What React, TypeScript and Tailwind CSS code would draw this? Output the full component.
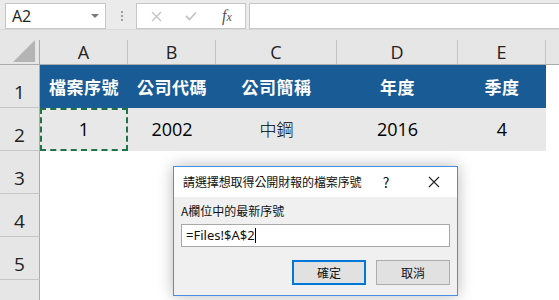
import { useState } from 'react';

const cols = [
  { key: 'A', w: 'w-[88px]' },
  { key: 'B', w: 'w-[88px]' },
  { key: 'C', w: 'w-[121px]' },
  { key: 'D', w: 'w-[121px]' },
  { key: 'E', w: 'w-[88px]' },
];

const headers = ['檔案序號', '公司代碼', '公司簡稱', '年度', '季度'];
const values = ['1', '2002', '中鋼', '2016', '4'];

function FormulaBar() {
  return (
    <div className="h-[30px] bg-[#ebebeb] flex items-start border-b border-[#dadada]">
      {/* Name box */}
      <div className="ml-[5px] mt-[3px] w-[101px] h-[26px] bg-white border border-[#c6c6c6] flex items-center justify-between pl-[6px] pr-[6px]">
        <span className="text-[16px] text-[#222] font-['Open_Sans',sans-serif]">A2</span>
        <svg width="8" height="5" viewBox="0 0 8 5">
          <path d="M0 0 L8 0 L4 4 Z" fill="#7a7a7a" />
        </svg>
      </div>
      {/* Grip dots */}
      <div className="ml-[15px] mt-[11px] flex flex-col gap-[2px]">
        <div className="w-[2px] h-[2px] bg-[#a0a0a0]" />
        <div className="w-[2px] h-[2px] bg-[#a0a0a0]" />
        <div className="w-[2px] h-[2px] bg-[#a0a0a0]" />
      </div>
      {/* Cancel / enter / fx */}
      <div className="ml-[13px] mt-[3px] w-[110px] h-[26px] bg-white border border-[#c6c6c6] flex items-center">
        <svg width="11" height="11" viewBox="0 0 11 11" className="ml-[14px]">
          <path d="M1 1 L10 10 M10 1 L1 10" stroke="#c4c4c4" strokeWidth="1.4" />
        </svg>
        <svg width="12" height="10" viewBox="0 0 12 10" className="ml-[23px]">
          <path d="M1 5 L4.5 8.5 L11 1.5" stroke="#c4c4c4" strokeWidth="1.8" fill="none" />
        </svg>
        <span className="ml-[25px] text-[16px] italic text-[#555] font-['Liberation_Serif',serif] leading-none">
          f<span className="text-[12px]">x</span>
        </span>
      </div>
      <div className="ml-[3px] mt-[3px] flex-1 h-[26px] bg-white border border-[#c6c6c6] border-r-0" />
    </div>
  );
}

function ColumnHeaders() {
  return (
    <div className="h-[35px] bg-[#e6e6e6] flex border-b border-[#ababab]">
      <div className="w-[40px] shrink-0 border-r border-[#ababab] mt-[10px] relative">
        <svg width="22" height="22" viewBox="0 0 22 22" className="absolute right-[4px] bottom-[2px]">
          <path d="M22 0 L22 22 L0 22 Z" fill="#b4b4b4" />
        </svg>
      </div>
      {cols.map((c) => (
        <div
          key={c.key}
          className={`${c.w} shrink-0 mt-[10px] border-r border-[#c4c4c4] flex items-center justify-center text-[18px] text-[#222] font-['Open_Sans',sans-serif] leading-none`}
        >
          {c.key}
        </div>
      ))}
      <div className="flex-1" />
    </div>
  );
}

function RowHeader({ n }: { n?: number }) {
  return (
    <div className="w-[40px] shrink-0 h-full bg-[#e6e6e6] border-r border-[#ababab] border-b border-b-[#c6c6c6] flex items-end justify-center pb-[5px] text-[19px] text-[#222] font-['Open_Sans',sans-serif] leading-none">
      {n}
    </div>
  );
}

function Dialog() {
  const [val] = useState('=Files!$A$2');
  return (
    <div className="absolute left-[173px] top-[166px] w-[285px] h-[130px] border border-[#4a90e2] bg-[#f0f0f0] shadow-[0_0_14px_rgba(0,0,0,0.28)] font-['Noto_Sans_CJK_TC','Noto_Sans',sans-serif] text-[12px] text-[#111]">
      <div className="h-[30px] bg-white flex items-center pl-[9px]">
        <span className="flex-1 tracking-[-0.1px]">請選擇想取得公開財報的檔案序號</span>
        <span className="w-[16px] text-[14px] text-center">?</span>
        <svg width="12" height="12" viewBox="0 0 12 12" className="ml-[34px] mr-[17px]">
          <path d="M1 1 L11 11 M11 1 L1 11" stroke="#222" strokeWidth="1.1" />
        </svg>
      </div>
      <div className="px-[7px] pt-[8px]">
        <div className="leading-none mb-[7px]">A欄位中的最新序號</div>
        <div className="h-[23px] bg-white border border-[#a8a8a8] flex items-center pl-[4px] text-[13px] font-['Noto_Sans',sans-serif]">
          <span>{val}</span>
          <span className="w-px h-[15px] bg-black" />
        </div>
        <div className="flex justify-end gap-[10px] mt-[13px]">
          <button className="w-[74px] h-[25px] bg-[#e1e1e1] border-2 border-[#0078d7] text-[12px]">確定</button>
          <button className="w-[74px] h-[25px] bg-[#e1e1e1] border border-[#adadad] text-[12px]">取消</button>
        </div>
      </div>
    </div>
  );
}

export default function App() {
  return (
    <div className="relative w-[559px] h-[300px] overflow-hidden bg-white">
      <FormulaBar />
      <ColumnHeaders />

      {/* Row 1: headers */}
      <div className="h-[43px] flex">
        <RowHeader n={1} />
        {cols.map((c, i) => (
          <div
            key={c.key}
            className={`${c.w} shrink-0 bg-[#185b95] flex items-center justify-center text-white font-bold text-[17px] font-['Noto_Sans_CJK_TC',sans-serif] tracking-[0.5px]`}
          >
            {headers[i]}
          </div>
        ))}
      </div>

      {/* Row 2: data */}
      <div className="h-[43px] flex">
        <RowHeader n={2} />
        {cols.map((c, i) => (
          <div
            key={c.key}
            className={`${c.w} shrink-0 bg-[#e8e8e8] flex items-center justify-center text-black font-['Open_Sans','Noto_Sans_CJK_TC',sans-serif] ${i === 2 ? 'text-[17px] font-light' : 'text-[18px] font-normal'} ${i === 0 ? 'border-2 border-dashed border-[#217346]' : ''}`}
          >
            {values[i]}
          </div>
        ))}
      </div>

      {[3, 4, 5].map((n) => (
        <div key={n} className="h-[43px] flex">
          <RowHeader n={n} />
        </div>
      ))}
      <div className="h-[43px] flex">
        <RowHeader />
      </div>

      <Dialog />
    </div>
  );
}
